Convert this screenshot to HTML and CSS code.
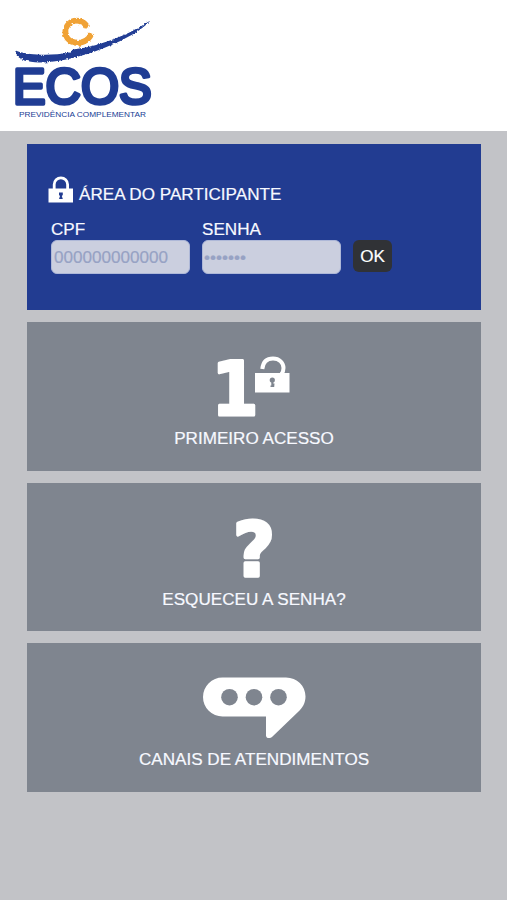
FILE: index.html
```html
<!DOCTYPE html>
<html lang="pt-BR">
<head>
<meta charset="utf-8">
<meta name="viewport" content="width=device-width, initial-scale=1">
<title>ECOS Previdência Complementar</title>
<link rel="stylesheet" href="styles.css">
</head>
<body>
<header class="header">
  <svg class="logo" viewBox="0 0 170 131" role="img" aria-label="ECOS Previdência Complementar">
    <defs>
      <filter id="brush" x="-10%" y="-30%" width="120%" height="160%">
        <feTurbulence type="fractalNoise" baseFrequency="0.4" numOctaves="2" seed="4"/>
        <feDisplacementMap in="SourceGraphic" scale="3.2" xChannelSelector="R" yChannelSelector="G"/>
      </filter>
    </defs>
    <path class="logo-sun" filter="url(#brush)" d="M87.500 27.500C84 20 74 18.500 69 23.500C63 29.500 65 38.500 71.500 41.500C79 45 88.500 41.500 91.500 33.500"/>
    <path class="logo-wave" filter="url(#brush)" d="M15.500 50.500C21 52.500 27 54 37 54.500C48 55 59 54.500 70 52.500L73 49.500C81 48.500 92 46.500 104 42.500C123 36.500 136 29.500 150.500 20.500C143 29 128 38.500 104 48C83 56 61 62.500 39 62.500C28 62 18 60 15.500 53Z"/>
    <text class="logo-name" x="13" y="103.900" textLength="138.500" lengthAdjust="spacingAndGlyphs">ECOS</text>
    <text class="logo-tag" x="19" y="116.500" textLength="127" lengthAdjust="spacingAndGlyphs">PREVIDÊNCIA COMPLEMENTAR</text>
  </svg>
</header>
<main class="content">
  <form class="login">
    <h1 class="login-title">
      <svg class="lock" viewBox="0 0 26 27" aria-hidden="true">
        <path class="shackle" d="M6.200 13V8.500a6.700 6.700 0 0 1 13.400 0V13"/>
        <path class="solid" d="M.5 12.500H25V26.500H.5z"/>
        <path class="keyhole" d="M11 16.500h3.800v2.500l-1 1 1 3h-3.800l1-3-1-1z"/>
      </svg>
      <span>ÁREA DO PARTICIPANTE</span>
    </h1>
    <div class="fields">
      <label class="field"><span class="name">CPF</span>
        <input class="input" type="text" placeholder="000000000000">
      </label>
      <label class="field"><span class="name">SENHA</span>
        <input class="input dots" type="text" placeholder="•••••••">
      </label>
      <button class="ok" type="button">OK</button>
    </div>
  </form>
  <a class="card">
    <svg class="icon" viewBox="0 0 110 70" aria-hidden="true">
      <text class="numeral" x="12.500" y="65.200" textLength="47" lengthAdjust="spacingAndGlyphs">1</text>
      <path class="open-shackle" d="M63.300 19C64 11.500 68.500 8.500 74 8.500C80.500 8.500 84.500 13 84.500 18C84.500 20 84 22 82.500 24"/>
      <path class="solid" d="M56 23h34.500v19.500H56z"/>
      <g class="hole"><circle cx="73.300" cy="30" r="2.600"/><path d="M72.300 31h2v2.500h1.200l-.3 3.500h-3.700v-1.500h.8z"/></g>
    </svg>
    <span class="card-label">PRIMEIRO ACESSO</span>
  </a>
  <a class="card">
    <svg class="icon" viewBox="0 0 110 70" aria-hidden="true">
      <text class="question" x="34" y="65" textLength="42" lengthAdjust="spacingAndGlyphs">?</text>
    </svg>
    <span class="card-label">ESQUECEU A SENHA?</span>
  </a>
  <a class="card">
    <svg class="icon" viewBox="0 0 110 70" aria-hidden="true">
      <path class="solid" d="M23.500 6.500H87C98 6.500 106.500 15 106.500 25.500C106.500 32 103.500 37 99 41L73.500 65.500C71 68 67 67.500 67 64.500V45.500H23.500A19.500 19.500 0 0 1 23.500 6.500Z"/>
      <g class="hole"><circle cx="30.500" cy="26.200" r="8.300"/><circle cx="55" cy="26.200" r="8.300"/><circle cx="79.500" cy="26.200" r="8.300"/></g>
    </svg>
    <span class="card-label">CANAIS DE ATENDIMENTOS</span>
  </a>
</main>
</body>
</html>
```

FILE: styles.css
```css
* { box-sizing: border-box; }
body {
  margin: 0;
  min-height: 900px;
  background: #c2c3c7;
  color: #f7f9ff;
  font: 17.1px/20px "Liberation Sans", Arial, sans-serif;
  -webkit-text-stroke: 0.2px;
}
.header { height: 131px; background: #fff; }
.logo { display: block; width: 170px; height: 131px; }
.logo-sun { fill: none; stroke: #f0a235; stroke-width: 5.800; }
.logo-wave { fill: #203d94; }
.logo-name {
  font: 49.5px "Liberation Sans", Arial, sans-serif;
  fill: #203d94;
  stroke: #203d94;
  stroke-width: 3.6;
  stroke-linejoin: round;
}
.logo-tag { font: 8px "Liberation Sans", Arial, sans-serif; fill: #203d94; }
.content {
  display: flex;
  flex-direction: column;
  gap: 12px;
  padding: 13px 26px 0 27px;
}
.login { height: 166px; padding: 32px 21px 0; background: #223c91; }
.login-title {
  display: flex;
  align-items: flex-end;
  gap: 5px;
  height: 27px;
  margin: 0;
  font-size: 17.1px;
  font-weight: normal;
}
.login-title span { height: 18px; }
.lock { width: 26px; height: 27px; flex: none; }
.shackle { fill: none; stroke: #fff; stroke-width: 2.800; }
.open-shackle { fill: none; stroke: #fff; stroke-width: 4; stroke-linecap: butt; }
.solid { fill: #fff; }
.keyhole { fill: #223c91; }
.hole { fill: #7f858f; }
.fields { display: flex; align-items: flex-end; gap: 12px; padding: 17px 0 0 3px; }
.field { display: block; width: 139px; }
.name { display: block; height: 20px; }
.input {
  display: block;
  width: 139px;
  height: 34px;
  margin: 0;
  padding: 1px 2px 0;
  border: 1px solid #aeb8d8;
  border-radius: 6px;
  background: #cbcfdf;
  color: #223c91;
  font: 17.1px "Liberation Sans", Arial, sans-serif;
}
.input::placeholder { color: #97a2c4; opacity: 1; }
.dots { padding-left: 1px; }
.ok {
  width: 39px;
  height: 32px;
  margin: 0 0 2px;
  padding: 1px 0 0;
  border: 0;
  border-radius: 6px;
  background: #303236;
  color: #fff;
  font: 17.1px/31px "Liberation Sans", Arial, sans-serif;
}
.card {
  display: flex;
  flex-direction: column;
  align-items: center;
  height: 149px;
  padding-top: 28px;
  background: #7f858f;
}
.card + .card { height: 148px; }
.card + .card + .card { height: 149px; }
.icon { display: block; width: 110px; height: 70px; overflow: visible; }
.card-label { margin-top: 9px; line-height: 20px; white-space: nowrap; }
.numeral, .question {
  font: bold 74px "DejaVu Sans", sans-serif;
  fill: #fff;
  stroke: #fff;
  stroke-width: 3;
  stroke-linejoin: round;
}
.question { font-size: 75px; stroke-width: 3.6; }
```
